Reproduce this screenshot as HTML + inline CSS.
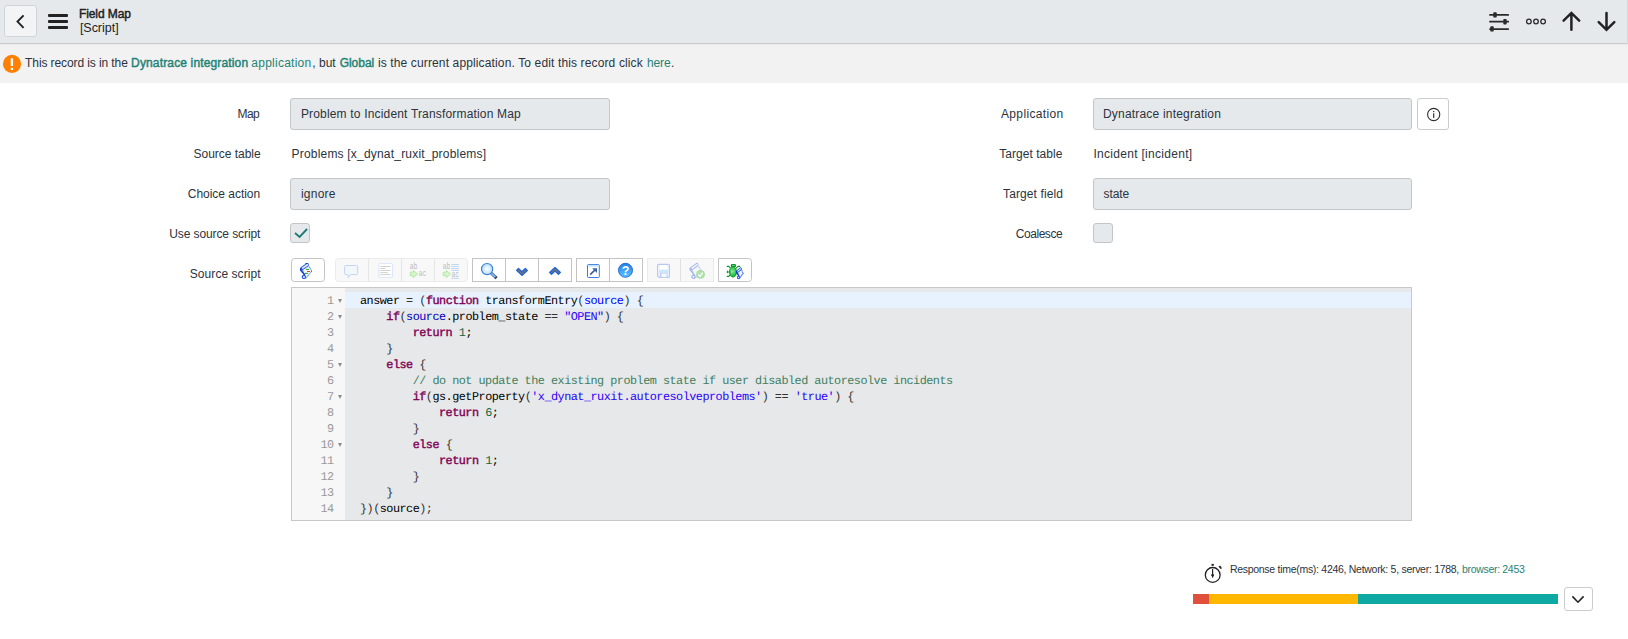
<!DOCTYPE html>
<html><head><meta charset="utf-8"><title>Field Map</title>
<style>
*{box-sizing:border-box;margin:0;padding:0}
html,body{width:1628px;height:639px;overflow:hidden;background:#fff}
body{position:relative;font-family:"Liberation Sans",sans-serif;font-size:12px;color:#2b333d}
.abs{position:absolute;white-space:nowrap}
#hdr{left:0;top:0;width:1628px;height:44px;background:#e6e9eb;border-bottom:1px solid #cbcbcb;border-right:1px solid #d6d9db}
#back{left:4px;top:5px;width:33px;height:32px;background:#f3f4f6;border:1px solid #d2d5d7;border-radius:3px}
.bar{left:48px;width:20px;height:3px;background:#222;border-radius:1px}
#info{left:0;top:44px;width:1628px;height:38.5px;background:linear-gradient(#ebebeb,#f2f2f2 2.5px,#f2f2f2)}
.t{line-height:16px;height:16px}
.lbl{color:#2b333d}
.inp{height:32px;background:#e6e9eb;border:1px solid #c3c6c8;border-radius:3px}
a,.lnk{color:#1f8476;text-decoration:none}
.tb{top:258px;height:24px;border:1px solid #bdbdbd;background:#fff}
.tbd{top:258px;height:24px;border:1px solid #e4e4e4;background:#f7f7f7}
#ed{left:291px;top:287px;width:1121px;height:234px;border:1px solid #c8c8c8;background:#e6e8ea}
#gut{left:0;top:0;width:53.3px;height:232px;background:#f7f7f7}
#act{left:53.3px;top:4px;width:1065.7px;height:16px;background:#e8f2ff}
.ln{font-family:"Liberation Mono",monospace;font-size:11.8px;letter-spacing:-0.495px;text-rendering:geometricPrecision;line-height:16px;height:16px;white-space:pre;color:#000}
.fa{left:45.6px;width:0;height:0;border-left:2.6px solid transparent;border-right:2.6px solid transparent;border-top:4.4px solid #8c8c8c}
.n{color:#999;text-align:right;width:41px;left:0.7px}
.k{color:#7f0055;-webkit-text-stroke:0.4px #7f0055}.s{color:#2a00ff}.c{color:#3f7f5f}.v{color:#0000c0}.d{color:#00f}.nu{color:#164}.b{color:#333}
</style></head><body>
<div id="hdr" class="abs"></div>
<div id="back" class="abs"></div>
<div class="abs bar" style="top:14px"></div><div class="abs bar" style="top:20px"></div><div class="abs bar" style="top:26px"></div>
<div id="t_title" class="abs t" style="color:#222;left:78.90px;top:6px;-webkit-text-stroke:0.45px;font-size:12px;letter-spacing:-0.069px">Field Map</div>
<div id="t_sub" class="abs t" style="color:#222;left:79.90px;top:19.5px;font-size:12.5px;letter-spacing:-0.026px">[Script]</div>

<svg class="abs" style="left:0;top:0" width="1628" height="43" viewBox="0 0 1628 43">
<path d="M23.6 15.3 L17.5 21.6 L23.6 27.9" fill="none" stroke="#222" stroke-width="1.9"/>
<g stroke="#2a2a2a" stroke-width="1.75" fill="none" stroke-linecap="round">
<path d="M1490 14.9 H1508.2 M1490 21.7 H1508.2 M1490 29 H1508.2"/>
</g>
<g fill="#2a2a2a"><rect x="1493.3" y="12.3" width="3.4" height="5.3" rx="0.9"/><rect x="1503.3" y="19.1" width="3.4" height="5.3" rx="0.9"/><rect x="1490.3" y="26.3" width="3.4" height="5.3" rx="0.9"/></g>
<g fill="none" stroke="#2a2a2a" stroke-width="1.3"><circle cx="1528.9" cy="21.5" r="2.3"/><circle cx="1536" cy="21.5" r="2.3"/><circle cx="1543.1" cy="21.5" r="2.3"/></g>
<g fill="none" stroke="#222" stroke-width="2.5" stroke-linecap="round" stroke-linejoin="miter">
<path d="M1571.4 14 V29.8 M1563.6 20.6 L1571.4 12.9 L1579.2 20.6"/>
<path d="M1606.5 13 V28.8 M1598.7 22.1 L1606.5 29.8 L1614.3 22.1"/>
</g>
</svg>
<div id="info" class="abs"></div>
<div id="i1" class="abs t" style="left:25.10px;top:55.4px;letter-spacing:-0.100px">This record is in the</div>
<div id="i2" class="abs t lnk" style="left:131.10px;top:55.4px;-webkit-text-stroke:0.45px;letter-spacing:0.146px">Dynatrace integration</div>
<div id="i3" class="abs t lnk" style="left:251.30px;top:55.4px;letter-spacing:0.250px">application</div>
<div id="i4" class="abs t" style="left:312.30px;top:55.4px;letter-spacing:0.000px">, but</div>
<div id="i5" class="abs t lnk" style="left:339.70px;top:55.4px;-webkit-text-stroke:0.45px;letter-spacing:-0.036px">Global</div>
<div id="i6" class="abs t" style="left:377.90px;top:55.4px;letter-spacing:0.134px">is the current application. To edit this record click</div>
<div id="i7" class="abs t lnk" style="left:646.90px;top:55.4px;letter-spacing:-0.060px">here</div>
<div id="i8" class="abs t" style="left:671px;top:55.4px">.</div>

<!-- left column -->
<div id="l_map" class="abs t lbl" style="left:237.40px;top:106px;letter-spacing:-0.495px">Map</div>
<div id="l_src" class="abs t lbl" style="left:193.50px;top:146px;letter-spacing:-0.019px">Source table</div>
<div id="l_cho" class="abs t lbl" style="left:187.80px;top:186px;letter-spacing:-0.031px">Choice action</div>
<div id="l_use" class="abs t lbl" style="left:169.20px;top:226px;letter-spacing:-0.094px">Use source script</div>
<div id="l_scr" class="abs t lbl" style="left:189.80px;top:266px;letter-spacing:0.059px">Source script</div>
<div class="abs inp" style="left:290px;top:98px;width:320px"></div>
<div class="abs inp" style="left:290px;top:178px;width:320px"></div>
<div id="v_map" class="abs t" style="left:300.90px;top:106px;letter-spacing:0.174px">Problem to Incident Transformation Map</div>
<div id="v_src" class="abs t" style="left:291.50px;top:146px;letter-spacing:0.200px">Problems [x_dynat_ruxit_problems]</div>
<div id="v_cho" class="abs t" style="left:300.90px;top:186px;letter-spacing:0.252px">ignore</div>
<div class="abs" style="left:290px;top:223px;width:20px;height:20px;background:#e6e9eb;border:1px solid #c2c6c9;border-radius:3px"></div>

<!-- right column -->
<div id="r_app" class="abs t lbl" style="left:1001.00px;top:106px;letter-spacing:0.342px">Application</div>
<div id="r_tt" class="abs t lbl" style="left:999.20px;top:146px;letter-spacing:0.048px">Target table</div>
<div id="r_tf" class="abs t lbl" style="left:1003.10px;top:186px;letter-spacing:0.101px">Target field</div>
<div id="r_co" class="abs t lbl" style="left:1015.70px;top:226px;letter-spacing:-0.435px">Coalesce</div>
<div class="abs inp" style="left:1093px;top:98px;width:319px"></div>
<div class="abs inp" style="left:1093px;top:178px;width:319px"></div>
<div id="v_app" class="abs t" style="left:1103.00px;top:106px;letter-spacing:0.191px">Dynatrace integration</div>
<div id="v_tt" class="abs t" style="left:1093.40px;top:146px;letter-spacing:0.300px">Incident [incident]</div>
<div id="v_tf" class="abs t" style="left:1103.60px;top:186px;letter-spacing:-0.118px">state</div>
<div class="abs" style="left:1093px;top:223px;width:20px;height:20px;background:#e6e9eb;border:1px solid #c2c6c9;border-radius:3px"></div>
<div class="abs" style="left:1417px;top:98px;width:32px;height:32px;background:#fff;border:1px solid #ccc;border-radius:3px"></div>

<svg class="abs" style="left:285px;top:255px" width="475" height="30" viewBox="285 255 475 30">
<defs>
<radialGradient id="gl" cx="0.5" cy="0.5" r="0.6"><stop offset="0" stop-color="#fff"/><stop offset="1" stop-color="#a9d4ff"/></radialGradient>
<linearGradient id="gh" x1="0" y1="0" x2="0" y2="1"><stop offset="0" stop-color="#1f7fe8"/><stop offset="1" stop-color="#5cc4ff"/></linearGradient>
<radialGradient id="gb" cx="0.45" cy="0.45" r="0.6"><stop offset="0" stop-color="#d9f7dc"/><stop offset="0.55" stop-color="#3ad25a"/><stop offset="1" stop-color="#08b02a"/></radialGradient>
</defs>
<!-- button frames -->
<rect x="291.5" y="258.5" width="33" height="23" rx="3" fill="#fff" stroke="#c4c4c4"/>
<rect x="335.5" y="258.5" width="132" height="23" rx="3" fill="#f8f8f8" stroke="#ebebeb"/>
<path d="M368.5 259 V281 M401.5 259 V281 M434.5 259 V281" stroke="#e6e6e6"/>
<rect x="472.5" y="258.5" width="99" height="23" fill="#fff" stroke="#c4c4c4"/>
<path d="M505.5 259 V281 M538.5 259 V281" stroke="#c4c4c4"/>
<rect x="576.5" y="258.5" width="66" height="23" fill="#fff" stroke="#c4c4c4"/>
<path d="M609.5 259 V281" stroke="#c4c4c4"/>
<rect x="647.5" y="258.5" width="66" height="23" fill="#f8f8f8" stroke="#ebebeb"/>
<path d="M680.5 259 V281" stroke="#e0e0e0"/>
<path d="M718.5 258.5 H748.5 Q751.5 258.5 751.5 261.5 V278.5 Q751.5 281.5 748.5 281.5 H718.5 Z" fill="#fff" stroke="#c4c4c4"/>

<!-- 1 script icon : local origin 300,263 -->
<g transform="translate(300,263)">
<path d="M2.4 6.8 L8.7 2.9 L11.9 8 L6 15.1 L4.4 11.6 Z" fill="#f3f7ff" stroke="#2c62ea" stroke-width="1" stroke-dasharray="1.2 0.5"/>
<path d="M7.3 1.7 L1.7 5.6" stroke="#2c62ea" stroke-width="3.3" stroke-linecap="round"/>
<path d="M7.4 1.75 L2.6 5.1" stroke="#e1ebfb" stroke-width="1.7" stroke-linecap="round"/>
<path d="M5.4 0.5 H7.9" stroke="#1338c4" stroke-width="0.9"/>
<path d="M0.7 5.2 V7.2 L4.8 12" stroke="#1338c4" stroke-width="1.4" fill="none"/>
<circle cx="3.9" cy="13.9" r="1.6" fill="#fff" stroke="#2457e6" stroke-width="1.2"/>
<path d="M6 6.4 H8.9" stroke="#22b41f" stroke-width="1.1"/>
<path d="M7 8.5 H9.95" stroke="#f0461a" stroke-width="1.1"/>
<path d="M4.95 10.4 H8.05" stroke="#22b41f" stroke-width="1.1"/>
</g>
<!-- 2 comment -->
<path d="M345.6 265.5 H356.6 Q357.6 265.5 357.6 266.5 V273.6 Q357.6 274.6 356.6 274.6 H350.6 L348.4 277.6 L348 274.6 H345.6 Q344.6 274.6 344.6 273.6 V266.5 Q344.6 265.5 345.6 265.5 Z" fill="#f3f7fd" stroke="#bcd2ec" stroke-width="0.9"/>
<!-- 3 format -->
<rect x="378.9" y="263.6" width="13.6" height="13.8" rx="1" fill="#fff" stroke="#d5e3fb" stroke-width="0.9"/>
<path d="M380.3 266.5 H390.6 M380.3 268.5 H385.2 M380.3 270.5 H390.6 M380.3 272.6 H388 M380.3 274.6 H390.6" stroke="#c4c4c4" stroke-width="0.8"/>
<!-- 4 replace -->
<g font-family="'Liberation Mono',monospace" font-size="8.4" fill="#b9b9b9">
<text x="409.7" y="268.9" textLength="7.6" lengthAdjust="spacingAndGlyphs">ab</text><text x="418.7" y="275.9" textLength="7.6" lengthAdjust="spacingAndGlyphs">ac</text>
<text x="442.7" y="268.9" textLength="7.6" lengthAdjust="spacingAndGlyphs">ab</text><text x="451.5" y="276.7" textLength="7.6" lengthAdjust="spacingAndGlyphs">ac</text>
</g>
<path d="M410.2 272.2 H413.2 V270.4 L417.6 274 L413.2 277.7 V275.7 H410.2 Z" fill="#d6f5cc" stroke="#a9e59b" stroke-width="0.8" stroke-linejoin="round"/>
<path d="M443.2 272.2 H446.2 V270.4 L450.6 274 L446.2 277.7 V275.7 H443.2 Z" fill="#d6f5cc" stroke="#a9e59b" stroke-width="0.8" stroke-linejoin="round"/>
<path d="M451.3 264.5 H458.9 M451.3 266.5 H458.9 M451.3 268.5 H458.9 M451.3 270.4 H458.9 M451.3 278.3 H458.9" stroke="#b9d0f0" stroke-width="0.9"/>
<!-- 5 search -->
<path d="M491.2 273.2 L496.5 278.2" stroke="#3a5f9e" stroke-width="3" stroke-linecap="butt"/>
<path d="M491.4 273.4 L495.3 277.1" stroke="#8cc0f4" stroke-width="1.5"/>
<path d="M495.4 277.2 L496.5 278.2" stroke="#4a4a52" stroke-width="3"/>
<circle cx="487.1" cy="269.1" r="5.6" fill="url(#gl)" stroke="#3b82d4" stroke-width="1.2"/>
<!-- 6 down / 7 up -->
<path d="M516.6 270.4 L518.5 268.5 L521.9 271.7 L525.3 268.5 L527.3 270.4 L521.9 275.4 Z" fill="#737373" stroke="#1f66d8" stroke-width="1.3" stroke-linejoin="round"/>
<path d="M549.6 272.4 L551.5 274.3 L555 271.1 L558.4 274.3 L560.4 272.4 L555 267.4 Z" fill="#737373" stroke="#1f66d8" stroke-width="1.3" stroke-linejoin="round"/>
<!-- 8 popup -->
<rect x="587.5" y="264.6" width="11.8" height="12.9" rx="0.8" fill="#fff" stroke="#3a7ae0" stroke-width="1"/>
<rect x="588" y="265.1" width="10.8" height="1.6" fill="#c4e6ff"/>
<path d="M590.2 274.6 L595 269.9" stroke="#3d5f96" stroke-width="1.6"/>
<path d="M592.2 268.3 H597 V273 Z" fill="#3b62a8"/>
<!-- 9 help -->
<circle cx="625.5" cy="270.3" r="7" fill="url(#gh)" stroke="#1c62d6" stroke-width="0.9"/>
<text x="625.5" y="274.9" text-anchor="middle" font-family="Liberation Sans,sans-serif" font-weight="bold" font-size="12.5" fill="#fff">?</text>
<!-- 10 save (disabled) -->
<path d="M658.7 264.4 H668.3 Q669.5 264.4 669.5 265.6 V276.2 Q669.5 277.4 668.3 277.4 H659.4 L657.5 275.9 V265.6 Q657.5 264.4 658.7 264.4 Z" fill="#edf4fe" stroke="#b8c8f1" stroke-width="1.1"/>
<rect x="659.8" y="265" width="7.3" height="4.7" fill="#fff"/>
<rect x="659" y="269.7" width="9.4" height="2.9" fill="#cde7fb"/>
<rect x="660.3" y="273.1" width="6.8" height="4.2" fill="#f6faff" stroke="#bccbf2" stroke-width="0.8"/>
<rect x="660.5" y="273.3" width="0.9" height="3.8" fill="#b8c8f1"/>
<!-- 11 script check (disabled) -->
<g transform="translate(689.6,262.9)" opacity="0.42">
<path d="M2.4 6.8 L8.7 2.9 L11.9 8 L6 15.1 L4.4 11.6 Z" fill="#f3f7ff" stroke="#2c62ea" stroke-width="1" stroke-dasharray="1.2 0.5"/>
<path d="M7.3 1.7 L1.7 5.6" stroke="#2c62ea" stroke-width="3.3" stroke-linecap="round"/>
<path d="M7.4 1.75 L2.6 5.1" stroke="#e8f0fc" stroke-width="1.7" stroke-linecap="round"/>
<path d="M0.7 5.2 V7.2 L4.8 12" stroke="#2c55d8" stroke-width="1.3" fill="none"/>
<circle cx="3.9" cy="13.9" r="1.6" fill="#fff" stroke="#2457e6" stroke-width="1.2"/>
</g>
<circle cx="700.5" cy="274.4" r="4.4" fill="#a6dba0"/>
<circle cx="700.5" cy="274.4" r="3.2" fill="#b4e3ae"/>
<path d="M698.3 274.6 L699.9 276.4 L702.8 272.6" fill="none" stroke="#fff" stroke-width="1.3"/>
<!-- 12 debug -->
<g stroke="#0e9a2a" stroke-width="1.1" fill="none" stroke-linecap="round">
<path d="M727.2 266.4 H728.8 L730.2 267.9 M727.4 271.1 V272.8 M727.6 272 H729.8 M727.2 276.4 H728.8 L730.2 275 M739.8 266.4 H738.2 L736.4 267.9"/>
</g>
<rect x="730.8" y="263.9" width="5.2" height="3.4" rx="1.2" fill="#0d9430"/>
<rect x="732" y="265" width="2.8" height="0.9" rx="0.4" fill="#6fd68a"/>
<ellipse cx="733" cy="271.9" rx="3.5" ry="5.2" fill="url(#gb)" stroke="#0a9524" stroke-width="0.9"/>
<path d="M733 267.6 V276" stroke="#2fb04a" stroke-width="0.7"/>
<g transform="translate(736.1,267.4) scale(0.6,0.72)">
<path d="M2.4 6.8 L8.7 2.9 L11.9 8 L6 15.1 L4.4 11.6 Z" fill="#eaf1fe" stroke="#2457e6" stroke-width="1.5" stroke-dasharray="1.6 0.6"/>
<path d="M7.6 1.8 L1.7 5.8" stroke="#2457e6" stroke-width="3.8" stroke-linecap="round"/>
<path d="M7.7 1.85 L2.6 5.3" stroke="#dbe7fb" stroke-width="1.6" stroke-linecap="round"/>
<path d="M0.7 5.2 V7.2 L4.8 12" stroke="#1338c4" stroke-width="1.9" fill="none"/>
<circle cx="3.9" cy="13.9" r="1.7" fill="#fff" stroke="#2457e6" stroke-width="1.6"/>
</g>
</svg>
<!-- editor -->
<div id="ed" class="abs"><div id="gut" class="abs"></div><div id="act" class="abs"></div>
<div class="abs ln n" style="top:4.7px">1</div>
<div class="abs fa" style="top:11px"></div>
<div class="abs ln" style="left:68px;top:4.7px"><span>answer</span> = <span class="b">(</span><span class="k">function</span> transformEntry<span class="b">(</span><span class="d">source</span><span class="b">)</span> <span class="b">{</span></div>
<div class="abs ln n" style="top:20.7px">2</div>
<div class="abs fa" style="top:27px"></div>
<div class="abs ln" style="left:68px;top:20.7px">    <span class="k">if</span><span class="b">(</span><span class="v">source</span>.problem_state == <span class="s">"OPEN"</span><span class="b">)</span> <span class="b">{</span></div>
<div class="abs ln n" style="top:36.7px">3</div>
<div class="abs ln" style="left:68px;top:36.7px">        <span class="k">return</span> <span class="nu">1</span>;</div>
<div class="abs ln n" style="top:52.7px">4</div>
<div class="abs ln" style="left:68px;top:52.7px">    <span class="b">}</span></div>
<div class="abs ln n" style="top:68.7px">5</div>
<div class="abs fa" style="top:75px"></div>
<div class="abs ln" style="left:68px;top:68.7px">    <span class="k">else</span> <span class="b">{</span></div>
<div class="abs ln n" style="top:84.7px">6</div>
<div class="abs ln" style="left:68px;top:84.7px">        <span class="c">// do not update the existing problem state if user disabled autoresolve incidents</span></div>
<div class="abs ln n" style="top:100.7px">7</div>
<div class="abs fa" style="top:107px"></div>
<div class="abs ln" style="left:68px;top:100.7px">        <span class="k">if</span><span class="b">(</span>gs.getProperty<span class="b">(</span><span class="s">'x_dynat_ruxit.autoresolveproblems'</span><span class="b">)</span> == <span class="s">'true'</span><span class="b">)</span> <span class="b">{</span></div>
<div class="abs ln n" style="top:116.7px">8</div>
<div class="abs ln" style="left:68px;top:116.7px">            <span class="k">return</span> <span class="nu">6</span>;</div>
<div class="abs ln n" style="top:132.7px">9</div>
<div class="abs ln" style="left:68px;top:132.7px">        <span class="b">}</span></div>
<div class="abs ln n" style="top:148.7px">10</div>
<div class="abs fa" style="top:155px"></div>
<div class="abs ln" style="left:68px;top:148.7px">        <span class="k">else</span> <span class="b">{</span></div>
<div class="abs ln n" style="top:164.7px">11</div>
<div class="abs ln" style="left:68px;top:164.7px">            <span class="k">return</span> <span class="nu">1</span>;</div>
<div class="abs ln n" style="top:180.7px">12</div>
<div class="abs ln" style="left:68px;top:180.7px">        <span class="b">}</span></div>
<div class="abs ln n" style="top:196.7px">13</div>
<div class="abs ln" style="left:68px;top:196.7px">    <span class="b">}</span></div>
<div class="abs ln n" style="top:212.7px">14</div>
<div class="abs ln" style="left:68px;top:212.7px"><span class="b">})(</span>source<span class="b">);</span></div>
</div>

<!-- footer -->
<!--MISC-->
<div id="f1" class="abs t" style="left:1229.90px;top:561px;font-size:10.5px;letter-spacing:-0.285px">Response time(ms): 4246, Network: 5, server: 1788,</div>
<div id="f2" class="abs t lnk" style="left:1462.00px;top:561px;font-size:10.5px;letter-spacing:-0.315px">browser: 2453</div>
<div class="abs" style="left:1193px;top:594px;width:16px;height:10px;background:#e0503c"></div>
<div class="abs" style="left:1209px;top:594px;width:149px;height:10px;background:#ffb700"></div>
<div class="abs" style="left:1358px;top:594px;width:200px;height:10px;background:#0fa9a3"></div>
<div class="abs" style="left:1563.5px;top:587px;width:29px;height:23.5px;background:#fff;border:1px solid #ccc;border-radius:3px"></div>
<svg class="abs" style="left:0;top:50px" width="30" height="30" viewBox="0 50 30 30"><circle cx="12" cy="63.9" r="9.1" fill="#ff8000"/><rect x="10.7" y="58.2" width="2.4" height="7.8" rx="0.5" fill="#fff"/><rect x="10.7" y="67.7" width="2.4" height="2.2" rx="0.4" fill="#fff"/></svg>
<svg class="abs" style="left:1417px;top:98px" width="32" height="32" viewBox="1417 98 32 32"><circle cx="1433.7" cy="114.5" r="6.1" fill="none" stroke="#2e2e2e" stroke-width="1.1"/><rect x="1433.1" y="113.3" width="1.2" height="4.6" fill="#2e2e2e"/><rect x="1433.1" y="110.9" width="1.2" height="1.3" fill="#2e2e2e"/></svg>
<svg class="abs" style="left:290px;top:223px" width="20" height="20" viewBox="290 223 20 20"><path d="M295 233 L299.6 236.9 L307.1 229" fill="none" stroke="#1f7a72" stroke-width="1.9"/></svg>
<svg class="abs" style="left:1200px;top:560px" width="26" height="26" viewBox="1200 560 26 26"><circle cx="1212.7" cy="574.9" r="7.4" fill="none" stroke="#222" stroke-width="1.3"/><rect x="1211.5" y="563.9" width="2.3" height="1.9" fill="#222"/><path d="M1212.6 569 V576 L1212.6 577.6" stroke="#222" stroke-width="1.2" fill="none"/><path d="M1211.3 575 H1213.9 L1212.6 577.8 Z" fill="#222"/><circle cx="1212.6" cy="575" r="1.3" fill="#222"/><path d="M1218.5 566.5 L1220.2 565.5 L1222 568.3 L1220.6 569 Z" fill="#222"/></svg>
<svg class="abs" style="left:1563px;top:587px" width="30" height="24" viewBox="1563 587 30 24"><path d="M1572.4 596.4 L1578 602.2 L1583.6 596.4" fill="none" stroke="#222" stroke-width="1.6"/></svg>
</body></html>
